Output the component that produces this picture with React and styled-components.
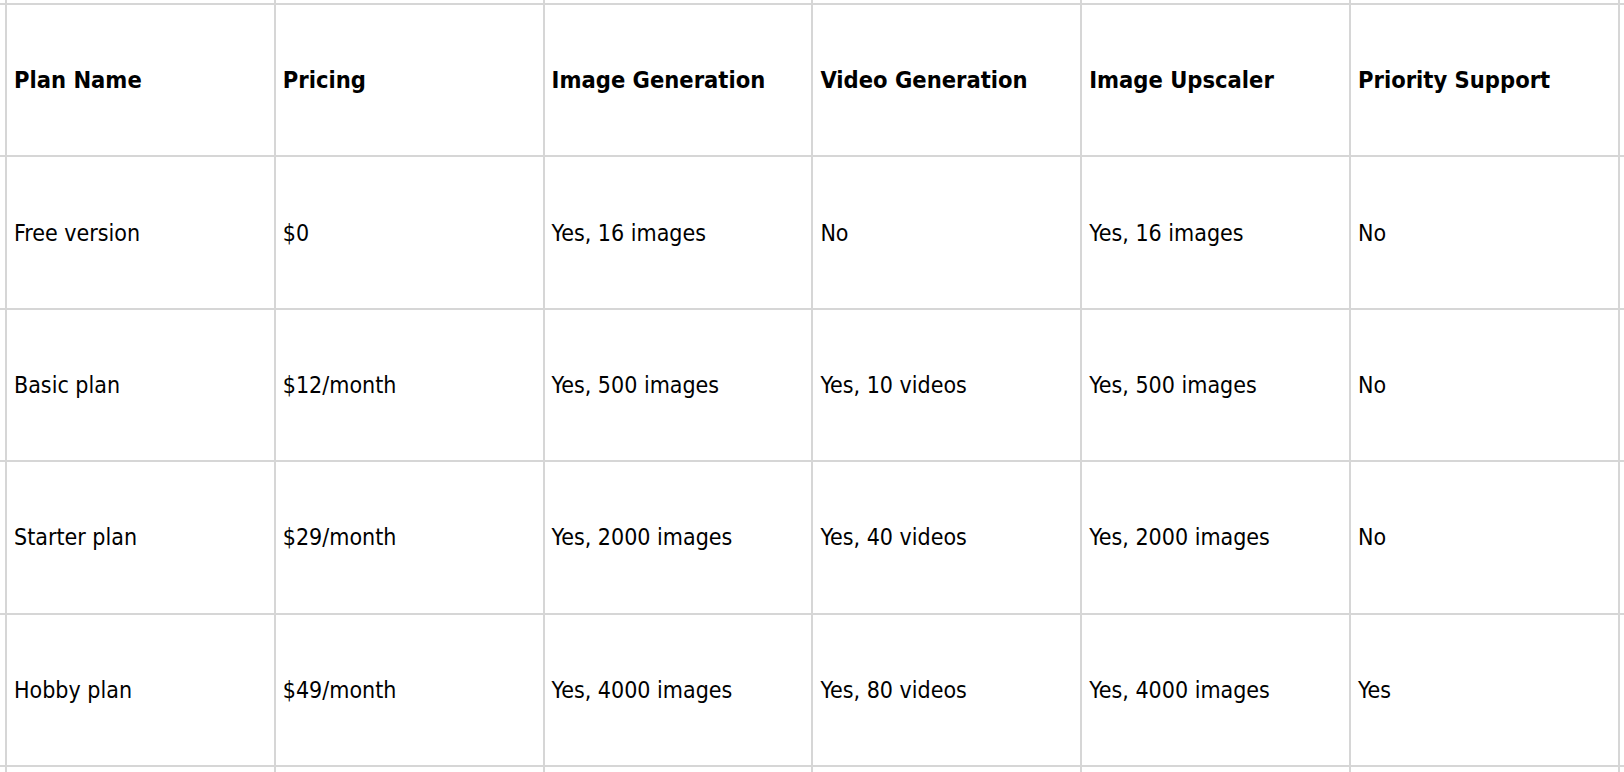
import React from 'react';
import styled, { createGlobalStyle } from 'styled-components';

const GlobalStyle = createGlobalStyle`
  html, body {
    margin: 0;
    padding: 0;
    background: #fff;
    overflow: hidden;
  }
`;

const Sheet = styled.div`
  display: grid;
  grid-template-columns: 5px repeat(6, 266.8px) 1fr;
  grid-template-rows: 3px repeat(5, 150.4px) 1fr;
  gap: 2px;
  width: 1624px;
  height: 772px;
  background: #d6d6d6;
  overflow: hidden;
  font-family: "DejaVu Sans Condensed", "DejaVu Sans", sans-serif;
  color: #000;
`;

const Pad = styled.div`
  background: #fff;
`;

const Cell = styled.div`
  display: flex;
  align-items: center;
  padding-left: 7px;
  background: #fff;
  font-size: ${p => (p.$head ? '23.5px' : '23px')};
  font-weight: ${p => (p.$head ? 700 : 400)};
  white-space: nowrap;
`;

const headers = [
  'Plan Name',
  'Pricing',
  'Image Generation',
  'Video Generation',
  'Image Upscaler',
  'Priority Support',
];

const plans = [
  ['Free version', '$0', 'Yes, 16 images', 'No', 'Yes, 16 images', 'No'],
  ['Basic plan', '$12/month', 'Yes, 500 images', 'Yes, 10 videos', 'Yes, 500 images', 'No'],
  ['Starter plan', '$29/month', 'Yes, 2000 images', 'Yes, 40 videos', 'Yes, 2000 images', 'No'],
  ['Hobby plan', '$49/month', 'Yes, 4000 images', 'Yes, 80 videos', 'Yes, 4000 images', 'Yes'],
];

const padRow = (key) =>
  Array.from({ length: 8 }, (_, i) => <Pad key={`${key}-${i}`} />);

const Row = ({ cells, head, rowKey }) => (
  <React.Fragment>
    <Pad />
    {cells.map((c, i) => (
      <Cell key={`${rowKey}-${i}`} $head={head}>{c}</Cell>
    ))}
    <Pad />
  </React.Fragment>
);

export default function App() {
  return (
    <React.Fragment>
      <GlobalStyle />
      <Sheet>
        {padRow('top')}
        <Row cells={headers} head rowKey="head" />
        {plans.map((p, i) => (
          <Row key={i} cells={p} rowKey={`r${i}`} />
        ))}
        {padRow('bottom')}
      </Sheet>
    </React.Fragment>
  );
}
